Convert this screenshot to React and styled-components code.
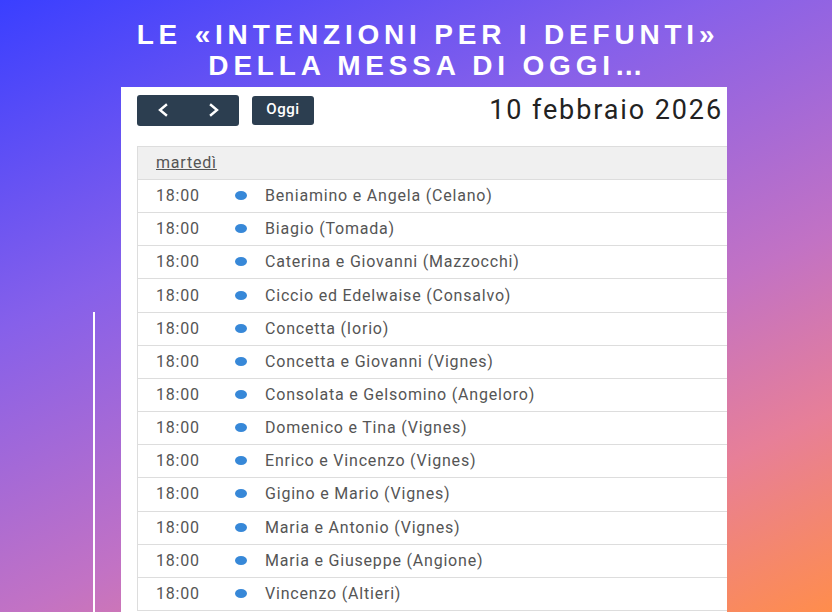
import React from 'react';
import styled, {createGlobalStyle} from 'styled-components';

const GlobalStyle = createGlobalStyle`
  html, body {
    margin: 0;
    padding: 0;
  }
  body {
    font-family: Roboto, "Liberation Sans", sans-serif;
  }
`;

const Page = styled.div`
  width: 832px;
  height: 612px;
  overflow: hidden;
  display: flex;
  flex-direction: column;
  background: linear-gradient(
    155deg,
    #3a3fff 0%,
    #8660ea 33%,
    #c272c4 62%,
    #e77f98 80%,
    #ff8d4c 100%
  );
`;

const Title = styled.h1`
  margin: 0;
  padding: 19px 0 0 24px;
  height: 87px;
  flex-shrink: 0;
  box-sizing: border-box;
  text-align: center;
  color: #fff;
  font-family: "Liberation Sans", Arial, sans-serif;
  font-weight: 700;
  font-size: 28px;
  line-height: 31px;
  letter-spacing: 4.8px;
`;

const Body = styled.div`
  flex: 1;
  display: flex;
  min-height: 0;
`;

const Side = styled.div`
  width: 121px;
  flex-shrink: 0;
  padding-top: 225px;
  box-sizing: border-box;
`;

const SideLine = styled.div`
  margin-left: 93px;
  width: 2px;
  height: 400px;
  background: #fff;
`;

const Panel = styled.div`
  width: 606px;
  background: #fff;
  overflow: hidden;
  padding: 7px 6px 0 16px;
  box-sizing: border-box;
`;

const Toolbar = styled.div`
  display: flex;
  align-items: center;
  height: 32px;
  margin-bottom: 20px;
`;

const ButtonGroup = styled.div`
  display: flex;
  margin-right: 13px;
`;

const NavButton = styled.button`
  width: 51px;
  height: 31px;
  border: 0;
  padding: 0;
  background: #2c3e50;
  color: #fff;
  display: flex;
  align-items: center;
  justify-content: center;
  border-radius: ${({side}) => (side === 'left' ? '3px 0 0 3px' : '0 3px 3px 0')};

  svg {
    width: 14px;
    height: 14px;
  }
`;

const TodayButton = styled.button`
  height: 29px;
  width: 62px;
  border: 0;
  border-radius: 3px;
  background: #2c3e50;
  color: #fff;
  font-family: Roboto, sans-serif;
  font-size: 15px;
  font-weight: 500;
  letter-spacing: 0.6px;
  padding: 0 0 3px;
`;

const DateTitle = styled.h2`
  margin: 0 -2px 0 auto;
  font-family: Roboto, sans-serif;
  font-weight: 400;
  font-size: 27px;
  color: #222;
  letter-spacing: 1.9px;
`;

const Table = styled.div`
  width: 620px;
  border-left: 1px solid #ddd;
  border-top: 1px solid #ddd;
  font-family: Roboto, sans-serif;
  font-size: 16px;
  color: #555;
  letter-spacing: 0.8px;
`;

const DayRow = styled.div`
  height: 33px;
  box-sizing: border-box;
  background: #f0f0f0;
  border-bottom: 1px solid #ddd;
  display: flex;
  align-items: center;
  padding: 0 0 1px 18px;
`;

const DayLink = styled.span`
  text-decoration: underline;
`;

const EventRow = styled.div`
  height: 33.17px;
  box-sizing: border-box;
  border-bottom: 1px solid #ddd;
  display: flex;
  align-items: center;
  padding: 0 0 1px 18px;
`;

const Time = styled.span`
  width: 79px;
  flex-shrink: 0;
`;

const Dot = styled.span`
  width: 12px;
  height: 9px;
  border-radius: 50%;
  background: #3788d8;
  margin-right: 18px;
  flex-shrink: 0;
`;

const Name = styled.span`
  white-space: nowrap;
`;

const names = [
  'Beniamino e Angela (Celano)',
  'Biagio (Tomada)',
  'Caterina e Giovanni (Mazzocchi)',
  'Ciccio ed Edelwaise (Consalvo)',
  'Concetta (Iorio)',
  'Concetta e Giovanni (Vignes)',
  'Consolata e Gelsomino (Angeloro)',
  'Domenico e Tina (Vignes)',
  'Enrico e Vincenzo (Vignes)',
  'Gigino e Mario (Vignes)',
  'Maria e Antonio (Vignes)',
  'Maria e Giuseppe (Angione)',
  'Vincenzo (Altieri)',
];

function Chevron({dir}) {
  const d = dir === 'left' ? 'M10 2 L4 7 L10 12' : 'M4 2 L10 7 L4 12';
  return (
    <svg viewBox="0 0 14 14" fill="none">
      <path d={d} stroke="currentColor" strokeWidth="2.4" strokeLinecap="square" />
    </svg>
  );
}

export default function App() {
  return (
    <Page>
      <GlobalStyle />
      <Title>
        LE «INTENZIONI PER I DEFUNTI»
        <br />
        DELLA MESSA DI OGGI…
      </Title>
      <Body>
        <Side>
          <SideLine />
        </Side>
        <Panel>
          <Toolbar>
            <ButtonGroup>
              <NavButton side="left">
                <Chevron dir="left" />
              </NavButton>
              <NavButton side="right">
                <Chevron dir="right" />
              </NavButton>
            </ButtonGroup>
            <TodayButton>Oggi</TodayButton>
            <DateTitle>10 febbraio 2026</DateTitle>
          </Toolbar>
          <Table>
            <DayRow>
              <DayLink>martedì</DayLink>
            </DayRow>
            {names.map((name, idx) => (
              <EventRow key={idx}>
                <Time>18:00</Time>
                <Dot />
                <Name>{name}</Name>
              </EventRow>
            ))}
          </Table>
        </Panel>
      </Body>
    </Page>
  );
}
